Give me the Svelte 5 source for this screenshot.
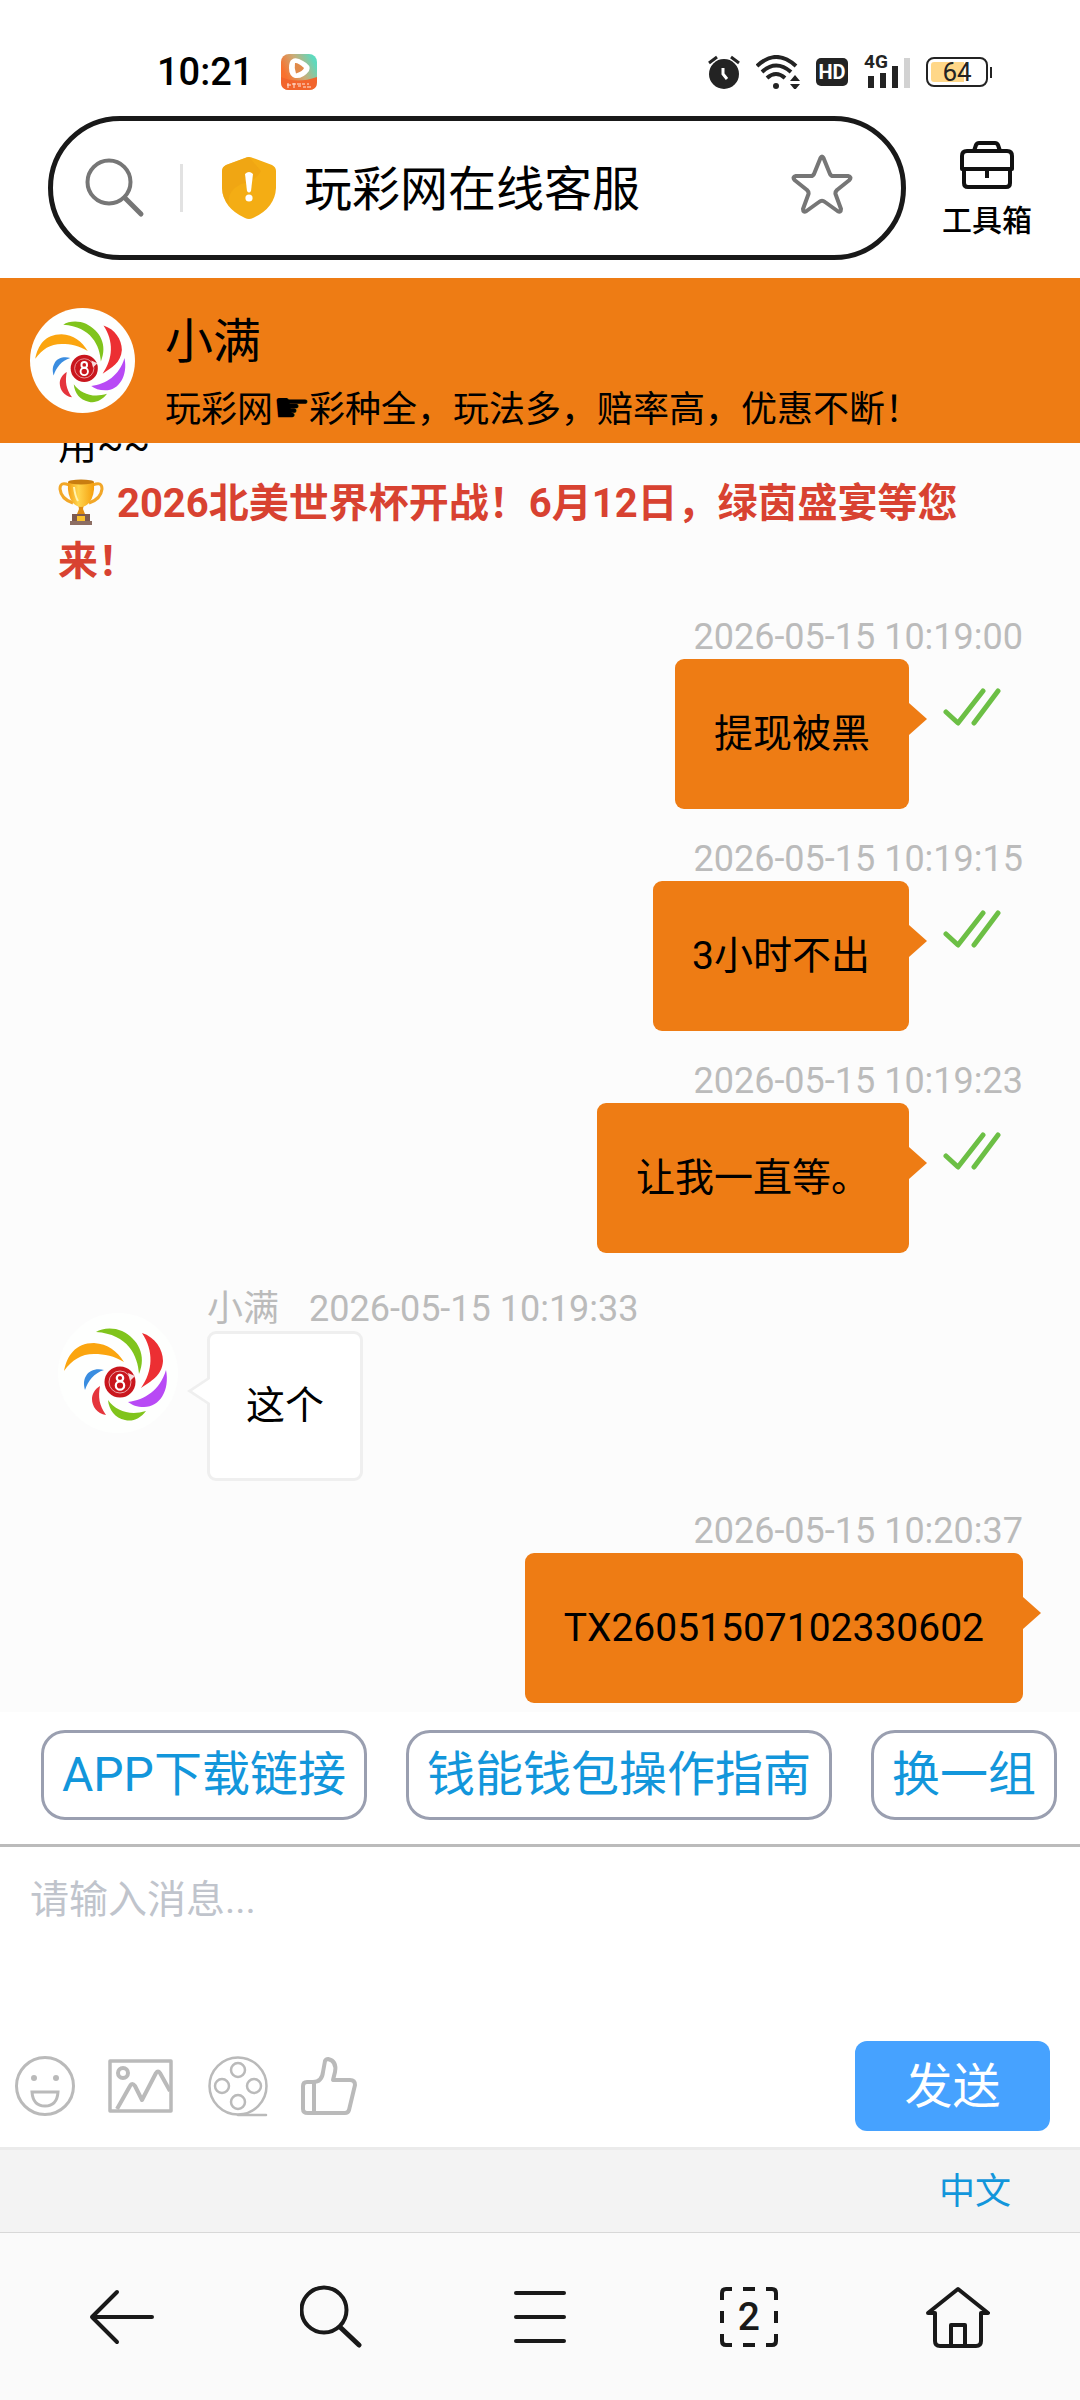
<script lang="ts">
  type Message = { id: number; from: 'me' | 'agent'; time: string; text: string; read?: boolean }

  const agent = '小满'

  const messages: Message[] = [
    { id: 1, from: 'me', time: '2026-05-15 10:19:00', text: '提现被黑', read: true },
    { id: 2, from: 'me', time: '2026-05-15 10:19:15', text: '3小时不出', read: true },
    { id: 3, from: 'me', time: '2026-05-15 10:19:23', text: '让我一直等。', read: true },
    { id: 4, from: 'agent', time: '2026-05-15 10:19:33', text: '这个' },
    { id: 5, from: 'me', time: '2026-05-15 10:20:37', text: 'TX26051507102330602' },
  ]

  const shortcuts = ['APP下载链接', '钱能钱包操作指南', '换一组']

  let draft = $state('')
</script>

{#snippet logo()}
  <svg class="logo" viewBox="0 0 120 120" aria-hidden="true">
    <circle cx="60" cy="60" r="60" fill="#fefffe" />
    <path fill="#fba50f" d="M6 58C9 43 17 30 36 30C50 31 59 38 66 49C56 43 47 41 36 41C23 41 14 47 6 58Z" />
    <path fill="#80c41c" d="M38 19C44 15 55 14 64 18C80 26 89 42 81 61C80 43 70 21 38 19Z" />
    <path fill="#ec2f33" d="M84 20C97 24 105 36 105 48C104 63 93 68 83 75C95 58 96 38 84 20Z" />
    <path fill="#b84af5" d="M108 57C112 77 102 94 86 94C79 94 74 92 70 89C87 87 102 77 108 57Z" />
    <path fill="#80c41c" d="M50 87C58 98 72 103 88 98C82 106 74 109 67 107C57 105 51 97 50 87Z" />
    <path fill="#e5353c" d="M42 73C40 84 41 92 48 102C39 101 34 93 34 86C34 81 37 76 42 73Z" />
    <path fill="#3a8de0" d="M46 57C39 55 31 57 28 63C25 68 26 73 27 77C30 68 36 60 46 57Z" />
    <circle cx="62" cy="69" r="15.5" fill="#c9161d" />
    <circle cx="62" cy="69" r="11" fill="none" stroke="#eda3a6" stroke-width="1" />
    <path d="M70 60L77 63L72 68Z" fill="#f7d9da" />
    <circle cx="62" cy="65" r="3.200" fill="none" stroke="#fff" stroke-width="2.200" />
    <circle cx="62" cy="72.500" r="4.200" fill="none" stroke="#fff" stroke-width="2.200" />
  </svg>
{/snippet}

<div class="app">
  <div class="status">
    <time>10:21</time>
    <svg class="app-badge" width="36" height="36" viewBox="0 0 36 36" aria-hidden="true">
      <defs>
        <linearGradient id="badge" x1="0" y1="0.6" x2="1" y2="0.1">
          <stop offset="0.1" stop-color="#f9712f" />
          <stop offset="0.5" stop-color="#c9ad78" />
          <stop offset="0.9" stop-color="#5ed9bd" />
        </linearGradient>
      </defs>
      <rect width="36" height="36" rx="8" fill="url(#badge)" />
      <path d="M0 23Q16 30 36 23V28Q36 36 28 36H8Q0 36 0 28Z" fill="#f2642c" />
      <path d="M11 5.500Q15 2.500 22 7Q31 11.500 28 17Q22 25 14 24Q8 22 8 14Q8 7 11 5.500Z" fill="#fff" />
      <path d="M14 9Q17 8.500 23 14Q22 17 15 19.500Q13 14 14 9Z" fill="#e08a4a" />
      <path d="M6 31h4M7 29v5M11 30h4M13 29v5M16 30h4M17 32h3M21 30h3M22 33h3M26 30h2M26 33h4" stroke="#ffe6da" stroke-width="1" />
    </svg>
    <div class="status-icons">
      <svg width="32" height="34" viewBox="0 0 32 34" aria-hidden="true">
        <circle cx="16" cy="19" r="15" fill="#232323" />
        <path d="M1 8L9 2M31 8L23 2" stroke="#232323" stroke-width="3" />
        <path d="M15 13v6l4 5" fill="none" stroke="#fff" stroke-width="3" />
      </svg>
      <svg width="44" height="34" viewBox="0 0 44 34" aria-hidden="true">
        <g fill="none" stroke="#232323" stroke-width="4">
          <path d="M1 11Q20-7 40 11" />
          <path d="M6 17Q20 4 35 17" />
          <path d="M11 23Q20 15 29 23" />
        </g>
        <circle cx="20" cy="31" r="3" fill="#232323" />
        <path d="M34 26l5-6 5 6zM34 29l5 6 5-6z" fill="#232323" />
      </svg>
      <span class="hd">HD</span>
      <span class="signal">
        <small>4G</small>
        <svg width="43" height="32" viewBox="0 0 43 32" aria-hidden="true">
          <path d="M1 20h6v12H1zM13 17h6v15h-6zM25 10h6v22h-6z" fill="#232323" />
          <path d="M37 2h6v30h-6z" fill="#d2d2d2" />
        </svg>
      </span>
      <span class="battery"><span>64</span></span>
    </div>
  </div>

  <div class="address-row">
    <div class="address">
      <svg width="60" height="60" viewBox="0 0 60 60" fill="none" stroke="#767676" stroke-width="4" stroke-linecap="round" aria-hidden="true">
        <circle cx="24" cy="24" r="21.500" />
        <path d="M40 40L56 56" stroke-width="5" />
      </svg>
      <span class="divider"></span>
      <svg class="shield" width="54" height="62" viewBox="0 0 54 62" aria-hidden="true">
        <path d="M27 0Q29 0 31 1L50 8Q54 10 54 14V31Q53 51 31 61Q27 63 23 61Q1 51 0 31V14Q0 10 4 8L23 1Q25 0 27 0Z" fill="#f4ad14" />
        <path d="M27 0L39 14Q34 24 19 27Q4 35 7 48Q0 41 0 31V14Q0 10 4 8L23 1Q25 0 27 0Z" fill="#eda212" opacity="0.6" />
        <path d="M23 17Q27 13 31 17L29 34Q27 37 25 34Z" fill="#fff" />
        <circle cx="27" cy="41" r="3.600" fill="#fff" />
      </svg>
      <button class="page-title">玩彩网在线客服</button>
      <button class="icon-button" aria-label="收藏">
        <svg width="62" height="68" viewBox="0 0 62 68" fill="none" stroke="#767676" stroke-width="4" stroke-linejoin="round" aria-hidden="true">
          <path d="M29.500 4Q31 1 32.500 4L39 20Q40 22 42 22H57Q61 23 58.500 26L46 36Q44 38 44.500 40L50 55Q50 59 46.500 57L34 48Q31 45.500 28 48L15.500 57Q12 59 12 55L17.500 40Q18 38 16 36L3.500 26Q1 23 5 22H20Q22 22 23 20Z" />
        </svg>
      </button>
    </div>
    <button class="toolbox">
      <svg width="54" height="48" viewBox="0 0 54 48" fill="none" stroke="#111" stroke-width="4" stroke-linejoin="round" aria-hidden="true">
        <path d="M14 10L16 4Q17 2 19 2H35Q37 2 38 4L40 10" />
        <path d="M2 28V15Q2 10 7 10H47Q52 10 52 15V28Z" />
        <path d="M4 28V42Q4 46 8 46H46Q50 46 50 42V28M27 28V37" />
      </svg>
      工具箱
    </button>
  </div>

  <header>
    <div class="avatar">{@render logo()}</div>
    <div class="who">
      <h1>{agent}</h1>
      <p>玩彩网<span class="hand">☛</span>彩种全，玩法多，赔率高，优惠不断！</p>
    </div>
  </header>

  <main>
    <p class="notice">
      用~~<br />
      <strong>
        <svg class="trophy" width="46" height="46" viewBox="0 0 46 46" aria-hidden="true">
          <defs>
            <linearGradient id="cup">
              <stop offset="0" stop-color="#f39c12" />
              <stop offset="0.4" stop-color="#ffd54f" />
              <stop offset="1" stop-color="#f59e0b" />
            </linearGradient>
          </defs>
          <path d="M11 6Q2 2 2 10Q3 20 15 24M35 6Q44 2 44 10Q43 20 31 24" fill="none" stroke="#f2a728" stroke-width="3" />
          <path d="M20 25h6l-1 5 2 5h-8l2-5z" fill="#e08c12" />
          <path d="M10 3H36Q37 17 31 24Q27 28 23 28Q19 28 15 24Q9 17 10 3Z" fill="url(#cup)" />
          <ellipse cx="23" cy="3" rx="13" ry="2.400" fill="#c97d10" />
          <path d="M16 8Q17 17 20 22" fill="none" stroke="#fff3b0" stroke-width="2" />
          <path d="M14 35H32V42H14Z" fill="#7d5a50" />
          <path d="M12 42H34V46H12Z" fill="#8d6e63" />
          <path d="M19 37h8v5h-8z" fill="#fbc02d" />
        </svg>
        2026北美世界杯开战！6月12日，绿茵盛宴等您来！
      </strong>
    </p>

    {#each messages as message (message.id)}
      <article class={message.from}>
        {#if message.from === 'agent'}
          <div class="avatar">{@render logo()}</div>
        {/if}
        <div class="message">
          <div class="meta">
            {#if message.from === 'agent'}<span>{agent}</span>{/if}
            <time>{message.time}</time>
          </div>
          <div class="line">
            <div class="bubble">{message.text}</div>
            {#if message.read}
              <svg class="read" width="58" height="38" viewBox="0 0 58 38" role="img" aria-label="已读">
                <path d="M3 24L15 35L40 3M31 35L55 3" fill="none" stroke="#6cbf45" stroke-width="5" stroke-linecap="round" stroke-linejoin="round" />
              </svg>
            {/if}
          </div>
        </div>
      </article>
    {/each}
  </main>

  <div class="shortcuts">
    {#each shortcuts as shortcut}
      <button>{shortcut}</button>
    {/each}
  </div>

  <form class="composer" onsubmit={(e) => e.preventDefault()}>
    <textarea bind:value={draft} placeholder="请输入消息..." aria-label="请输入消息"></textarea>
    <div class="tools">
      <button type="button" class="icon-button" aria-label="表情">
        <svg width="60" height="62" viewBox="0 0 60 62" fill="none" stroke="#bababa" stroke-width="3" aria-hidden="true">
          <circle cx="30" cy="31" r="28.500" />
          <circle cx="19" cy="23" r="3" fill="#bababa" stroke="none" />
          <circle cx="41" cy="23" r="3" fill="#bababa" stroke="none" />
          <path d="M17 37H43Q42 51 30 51Q18 51 17 37Z" />
        </svg>
      </button>
      <button type="button" class="icon-button picture" aria-label="图片">
        <svg width="65" height="54" viewBox="0 0 65 54" fill="none" stroke="#bababa" stroke-width="4" stroke-linejoin="round" aria-hidden="true">
          <rect x="2" y="2" width="61" height="50" stroke-width="3.500" />
          <circle cx="15" cy="14" r="5" />
          <path d="M9 50L22 27Q24 23 27 27L34 41L48 14Q50 11 52 14L62 32" />
        </svg>
      </button>
      <button type="button" class="icon-button film" aria-label="视频">
        <svg width="60" height="62" viewBox="0 0 60 62" fill="none" stroke="#bababa" stroke-width="2.500" stroke-linecap="round" aria-hidden="true">
          <circle cx="30" cy="31" r="28.500" />
          <circle cx="30" cy="15" r="7" />
          <circle cx="30" cy="47" r="7" />
          <circle cx="14" cy="31" r="7" />
          <circle cx="46" cy="31" r="7" />
          <path d="M30 60H58" />
        </svg>
      </button>
      <button type="button" class="icon-button thumb" aria-label="点赞">
        <svg width="56" height="60" viewBox="0 0 56 60" fill="none" stroke="#bababa" stroke-width="4" stroke-linejoin="round" aria-hidden="true">
          <path d="M12 26Q21 26 22 16L24 5Q25 3 27 3Q36 5 34 16L32 24H49Q54 24 54 29L48 54Q47 57 44 57H7Q2 57 2 53V30Q2 26 6 26ZM13 26V57" />
        </svg>
      </button>
      <button class="send">发送</button>
    </div>
  </form>

  <div class="language"><a href="#zh">中文</a></div>

  <nav>
    <button aria-label="返回">
      <svg width="66" height="64" viewBox="0 0 66 64" aria-hidden="true">
        <path d="M28 7L3 32L28 57M3 32H63" />
      </svg>
    </button>
    <button aria-label="搜索">
      <svg width="62" height="64" viewBox="0 0 62 64" aria-hidden="true">
        <circle cx="24" cy="25" r="22.500" />
        <path d="M41 43L59 60" stroke-width="5" />
      </svg>
    </button>
    <button aria-label="菜单">
      <svg width="54" height="64" viewBox="0 0 54 64" aria-hidden="true">
        <path d="M3 8H51M3 32H51M3 56H51" />
      </svg>
    </button>
    <button aria-label="标签页">
      <span class="tabs">
        <svg width="58" height="60" viewBox="0 0 58 60" aria-hidden="true">
          <path class="dashes" d="M2 13V6Q2 2 6 2H12M23 2H35M46 2H52Q56 2 56 6V13M56 24V36M56 47V54Q56 58 52 58H46M35 58H23M12 58H6Q2 58 2 54V47M2 36V24" />
        </svg>
        <span>2</span>
      </span>
    </button>
    <button aria-label="主页">
      <svg width="64" height="64" viewBox="0 0 64 64" aria-hidden="true">
        <path d="M9 28H2L32 4L62 28H55V56Q55 61 50 61H14Q9 61 9 56ZM25 61V40H39V61" />
      </svg>
    </button>
  </nav>
</div>

<style>
  :global(body) {
    background: #fff;
  }

  .app {
    display: flex;
    flex-direction: column;
    height: 100vh;
    font-family: Roboto, "Noto Sans CJK SC", sans-serif;
    color: #000;
  }
  button {
    padding: 0;
    border: 0;
    background: none;
    font: inherit;
    color: inherit;
  }
  svg { display: block; flex-shrink: 0; }
  .icon-button { display: flex; }

  .status {
    display: flex;
    align-items: center;
    height: 88px;
    padding: 28px 92px 0 157px;
    font-size: 38px;
    font-weight: 500;
  }
  .app-badge { margin-left: 28px; }
  .status-icons {
    display: flex;
    align-items: center;
    gap: 16px;
    margin-left: auto;
  }
  .hd {
    width: 32px;
    border-radius: 5px;
    background: #232323;
    color: #fff;
    font-size: 20px;
    font-weight: 700;
    line-height: 28px;
    text-align: center;
  }
  .signal { position: relative; padding-left: 3px; }
  .signal small {
    position: absolute;
    left: 0;
    top: -4px;
    color: #232323;
    font-size: 19px;
    font-weight: 700;
    line-height: 20px;
  }
  .battery {
    position: relative;
    width: 52px;
    padding: 3px;
    border: 2px solid #232323;
    border-radius: 8px;
    color: #232323;
    font-size: 26px;
    font-weight: 400;
    line-height: 20px;
    text-align: center;
    background: linear-gradient(90deg, #ffd788 64%, #fff 64%) content-box;
  }
  .battery::after {
    content: '';
    position: absolute;
    top: 8px;
    right: -6px;
    width: 2px;
    height: 11px;
    background: #232323;
  }

  .address-row {
    display: flex;
    padding: 0 12px 18px 48px;
  }
  .address {
    display: flex;
    flex: 1;
    align-items: center;
    box-sizing: border-box;
    height: 144px;
    padding: 0 48px 0 32px;
    border: 5px solid #191919;
    border-radius: 72px;
  }
  .divider {
    width: 3px;
    height: 48px;
    margin-left: 35px;
    background: #e2e2e2;
  }
  .shield { margin: 0 28px 0 39px; }
  .page-title {
    flex: 1;
    padding-top: 4px;
    font-size: 48px;
    line-height: 60px;
    text-align: left;
  }
  .toolbox {
    display: flex;
    flex-direction: column;
    align-items: center;
    justify-content: center;
    gap: 12px;
    width: 162px;
    padding-top: 6px;
    font-size: 30px;
    font-weight: 500;
    line-height: 40px;
  }

  header {
    display: flex;
    align-items: center;
    gap: 30px;
    height: 165px;
    padding: 0 30px;
    background: #ee7c14;
  }
  header .avatar { width: 105px; }
  .who { padding-top: 20px; }
  h1, p { margin: 0; }
  h1 {
    font-size: 48px;
    font-weight: 400;
    line-height: 80px;
  }
  header p {
    font-size: 36px;
    line-height: 57px;
  }
  .hand {
    display: inline-block;
    width: 36px;
    font-family: "DejaVu Sans", sans-serif;
    font-size: 42px;
    line-height: 36px;
  }

  main {
    display: flex;
    flex: 1;
    flex-direction: column;
    justify-content: flex-end;
    min-height: 0;
    padding: 0 57px 9px 58px;
    overflow: hidden;
    background: #fcfcfc;
    font-size: 39px;
    line-height: 57px;
  }
  .notice {
    max-width: 930px;
    margin-bottom: 24px;
  }
  .notice strong {
    color: #d84231;
    font-size: 40px;
  }
  .trophy {
    display: inline-block;
    margin-right: 3px;
    vertical-align: -8px;
  }
  article { display: flex; }
  article + article { margin-top: 28px; }
  .me { justify-content: flex-end; }
  article + .agent {
    gap: 29px;
    margin-top: 34px;
  }
  .agent .avatar {
    width: 120px;
    margin-top: 26px;
  }
  .meta {
    display: flex;
    gap: 30px;
    color: #bbb;
    font-size: 36px;
    line-height: 44px;
  }
  .me .meta { justify-content: flex-end; }
  .line { display: flex; }
  .me .line { justify-content: flex-end; }
  .bubble {
    position: relative;
    box-sizing: border-box;
    height: 150px;
    padding: 0 39px;
    border-radius: 9px;
    background: #ee7c14;
    line-height: 150px;
  }
  .me .bubble::after {
    content: '';
    position: absolute;
    top: 44px;
    left: 100%;
    border: 16px solid transparent;
    border-right: 0;
    border-left: 18px solid #ee7c14;
  }
  .agent .bubble {
    padding: 0 36px;
    border: 3px solid #efefef;
    background: #fff;
    line-height: 144px;
  }
  .agent .bubble::before,
  .agent .bubble::after {
    content: '';
    position: absolute;
    top: 42px;
    right: 100%;
    border: 15px solid transparent;
    border-left: 0;
    border-right: 23px solid #efefef;
  }
  .agent .bubble::after {
    top: 45px;
    border-width: 12px 18px 12px 0;
    border-right-color: #fff;
  }
  .read { margin: 29px 22px 0 34px; }

  .shortcuts {
    display: flex;
    gap: 39px;
    padding: 18px 24px 24px 41px;
    overflow: hidden;
    border-bottom: 3px solid #bbb;
  }
  .shortcuts button {
    flex-shrink: 0;
    height: 90px;
    padding: 0 18px;
    border: 3px solid #9a9fb0;
    border-radius: 24px;
    color: #1296db;
    font-size: 48px;
    line-height: 84px;
    white-space: nowrap;
  }

  textarea {
    display: block;
    box-sizing: border-box;
    width: 100%;
    height: 194px;
    padding: 25px 30px;
    border: 0;
    outline: 0;
    background: none;
    resize: none;
    font: 39px/57px Roboto, "Noto Sans CJK SC", sans-serif;
  }
  textarea::placeholder { color: #c0c4cc; }
  .tools {
    display: flex;
    align-items: center;
    padding: 0 30px 16px 15px;
  }
  .picture { margin-left: 33px; }
  .film { margin-left: 35px; }
  .thumb { margin-left: 33px; }
  .send {
    width: 195px;
    height: 90px;
    margin-left: auto;
    padding-top: 2px;
    border-radius: 12px;
    background: #46a2ff;
    color: #fff;
    font-size: 48px;
    line-height: 88px;
  }

  .language {
    padding: 2px 69px 0;
    border-top: 3px solid #ebebeb;
    border-bottom: 1px solid #d8d8d8;
    background: #f3f3f3;
    font-size: 36px;
    line-height: 80px;
    text-align: right;
  }
  .language a {
    color: #1296db;
    text-decoration: none;
  }

  nav {
    display: flex;
    height: 167px;
    padding: 0 18px;
    background: #fafafa;
  }
  nav button {
    display: flex;
    flex: 1;
    align-items: center;
    justify-content: center;
  }
  nav svg {
    fill: none;
    stroke: #191919;
    stroke-width: 4px;
    stroke-linecap: round;
    stroke-linejoin: round;
  }
  nav .dashes { stroke-linecap: butt; }
  .tabs {
    display: grid;
    place-items: center;
    color: #191919;
    font-size: 39px;
    font-weight: 500;
    line-height: 60px;
  }
  .tabs > * { grid-area: 1 / 1; }
</style>
